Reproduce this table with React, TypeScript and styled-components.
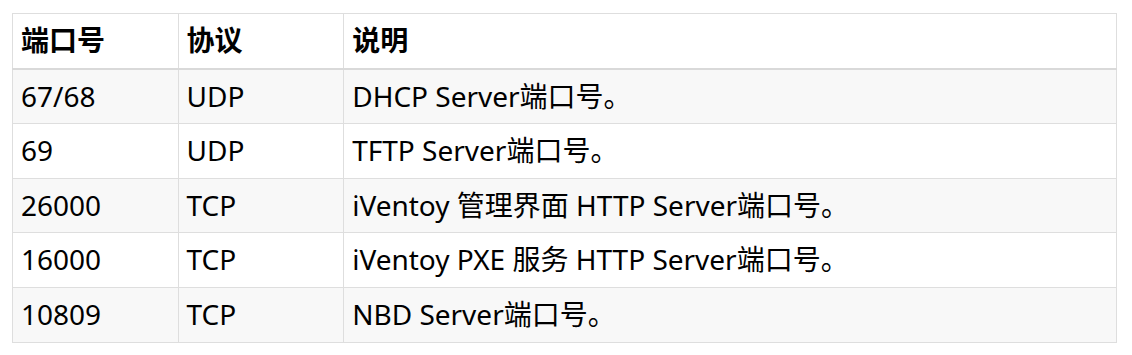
import React from "react";
import styled, { createGlobalStyle } from "styled-components";

const GlobalStyle = createGlobalStyle`
  html, body {
    margin: 0;
    padding: 0;
    background: #fff;
  }
  body {
    font-family: "Noto Sans", "Noto Sans CJK SC", sans-serif;
    color: #000;
  }
`;

const Page = styled.div`
  padding: 13px 0 0 12px;
`;

const Table = styled.table`
  width: 1105px;
  border-collapse: collapse;
  table-layout: fixed;
  font-size: 28px;
`;

const Col = styled.col<{ $w: string }>`
  width: ${(p) => p.$w};
`;

const HeadCell = styled.th`
  text-align: left;
  font-weight: 700;
  line-height: 35.6px;
  padding: 9px 8px;
  border: 1px solid #dedede;
  border-bottom: 2px solid #d9d9d9;
  background: #fff;
  white-space: nowrap;
`;

const Row = styled.tr<{ $striped: boolean }>`
  background: ${(p) => (p.$striped ? "#f8f8f8" : "#fff")};
`;

const Cell = styled.td`
  line-height: 35.6px;
  padding: 9px 8px;
  border: 1px solid #dedede;
  white-space: nowrap;
`;

interface Port {
  port: string;
  proto: string;
  desc: string;
}

const ports: Port[] = [
  { port: "67/68", proto: "UDP", desc: "DHCP Server端口号。" },
  { port: "69", proto: "UDP", desc: "TFTP Server端口号。" },
  { port: "26000", proto: "TCP", desc: "iVentoy 管理界面 HTTP Server端口号。" },
  { port: "16000", proto: "TCP", desc: "iVentoy PXE 服务 HTTP Server端口号。" },
  { port: "10809", proto: "TCP", desc: "NBD Server端口号。" },
];

export default function App() {
  return (
    <Page>
      <GlobalStyle />
      <Table>
        <colgroup>
          <Col $w="15%" />
          <Col $w="15%" />
          <Col $w="70%" />
        </colgroup>
        <thead>
          <tr>
            <HeadCell>端口号</HeadCell>
            <HeadCell>协议</HeadCell>
            <HeadCell>说明</HeadCell>
          </tr>
        </thead>
        <tbody>
          {ports.map((p, i) => (
            <Row key={p.port} $striped={i % 2 === 0}>
              <Cell>{p.port}</Cell>
              <Cell>{p.proto}</Cell>
              <Cell>{p.desc}</Cell>
            </Row>
          ))}
        </tbody>
      </Table>
    </Page>
  );
}
